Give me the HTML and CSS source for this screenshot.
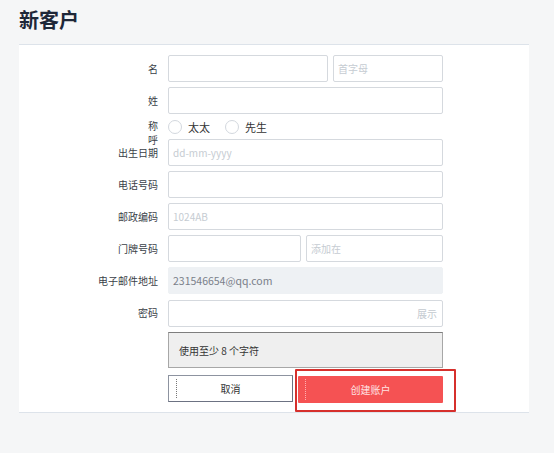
FILE: index.html
```
<!DOCTYPE html>
<html lang="zh">
<head>
    <meta charset="UTF-8">
    <meta name="viewport" content="width=device-width, initial-scale=1.0">
    <title>新客户</title>
    <link rel="stylesheet" href="styles.css">
</head>
<body>
    <h1 class="page-title">新客户</h1>

    <div class="card">
        <form class="customer-form">
            <label class="field-label">名</label>
            <div class="field-pair name-pair">
                <input class="text-input" type="text">
                <input class="text-input" type="text" placeholder="首字母">
            </div>

            <label class="field-label">姓</label>
            <input class="text-input" type="text">

            <label class="field-label title-label"><span class="wrap-label">称呼</span></label>
            <div class="radio-group">
                <span class="radio-option"><span class="radio-circle"></span>太太</span>
                <span class="radio-option"><span class="radio-circle"></span>先生</span>
            </div>

            <label class="field-label">出生日期</label>
            <input class="text-input" type="text" placeholder="dd-mm-yyyy">

            <label class="field-label">电话号码</label>
            <input class="text-input" type="text">

            <label class="field-label">邮政编码</label>
            <input class="text-input" type="text" placeholder="1024AB">

            <label class="field-label">门牌号码</label>
            <div class="field-pair house-pair">
                <input class="text-input" type="text">
                <input class="text-input" type="text" placeholder="添加在">
            </div>

            <label class="field-label">电子邮件地址</label>
            <input class="text-input readonly-input" type="text" value="231546654@qq.com" readonly>

            <label class="field-label">密码</label>
            <div class="password-box">
                <input class="text-input" type="password">
                <span class="show-link">展示</span>
            </div>

            <span></span>
            <div class="hint-box">使用至少 8 个字符</div>

            <span></span>
            <div class="button-row">
                <button type="button" class="btn btn-cancel"><span class="focus-mark"></span>取消</button>
                <div class="create-wrap">
                    <button type="button" class="btn btn-create"><span class="focus-mark"></span>创建账户</button>
                    <span class="highlight-box"></span>
                </div>
            </div>
        </form>
    </div>
</body>
</html>
```

FILE: styles.css
```
body {
    margin: 0;
    background-color: #f5f6f7;
    font-family: "Noto Sans CJK SC", "Noto Sans", sans-serif;
    color: #3a3f48;
}
.page-title {
    margin: 0;
    padding: 7px 19px 0;
    height: 37px;
    font-size: 20px;
    line-height: 26px;
    font-weight: 700;
    color: #1e2738;
}
.card {
    width: 510px;
    margin-left: 19px;
    background-color: #fff;
    border-top: 1px solid #dde3ea;
    border-bottom: 1px solid #dde3ea;
    padding: 10px 0 9px;
}
.customer-form {
    display: grid;
    grid-template-columns: 139px 275px;
    column-gap: 10px;
    row-gap: 5px;
}
.field-label {
    font-size: 10px;
    line-height: 14px;
    text-align: right;
    align-self: center;
    color: #3a3f48;
}
.title-label {
    align-self: start;
    height: 15px;
}
.wrap-label {
    display: inline-block;
    width: 12px;
    line-height: 14px;
}
.text-input {
    box-sizing: border-box;
    height: 27px;
    width: 100%;
    margin: 0;
    padding: 0 4px;
    border: 1px solid #d5d9de;
    border-radius: 2px;
    background: #fff;
    font-family: inherit;
    font-size: 10px;
    color: #3a3f48;
    outline: none;
}
.text-input::placeholder {
    color: #c6ccd2;
}
.field-pair {
    display: flex;
    gap: 5px;
}
.name-pair .text-input:first-child { width: 160px; }
.name-pair .text-input:last-child { width: 110px; }
.house-pair .text-input:first-child { width: 133px; }
.house-pair .text-input:last-child { width: 137px; }
.radio-group {
    display: flex;
    align-items: center;
    height: 15px;
    gap: 15px;
    font-size: 11px;
    color: #333;
}
.radio-option {
    display: flex;
    align-items: center;
    gap: 6px;
}
.radio-circle {
    box-sizing: border-box;
    width: 14px;
    height: 14px;
    border: 1px solid #d3d8de;
    border-radius: 50%;
    background: #fff;
}
.readonly-input {
    background-color: #eef1f4;
    border-color: #eef1f4;
    color: #7a808a;
    font-size: 10.5px;
}
.password-box {
    position: relative;
}
.show-link {
    position: absolute;
    right: 6px;
    top: 7px;
    font-size: 10px;
    color: #c3c9cf;
}
.hint-box {
    box-sizing: border-box;
    height: 36px;
    padding-left: 10px;
    display: flex;
    align-items: center;
    background-color: #efefef;
    border: 1px solid #a7a7a7;
    border-top-color: #7e7e7e;
    font-size: 10px;
    color: #333;
}
.button-row {
    display: flex;
    gap: 5px;
    margin-top: 2px;
}
.btn {
    position: relative;
    box-sizing: border-box;
    height: 27px;
    margin: 0;
    font-family: inherit;
    font-size: 10px;
    cursor: pointer;
}
.btn-cancel {
    width: 125px;
    background: #fff;
    color: #333;
    border: 1px solid #8d93a0;
    border-bottom-color: #6c7282;
    border-right-color: #6c7282;
}
.btn-create {
    width: 145px;
    background-color: #f55253;
    color: #ffe4e4;
    border: none;
    border-radius: 1px;
}
.focus-mark {
    position: absolute;
    left: 7px;
    top: 3px;
    bottom: 3px;
    border-left: 1px dotted #777;
}
.btn-create .focus-mark {
    border-left-color: #ffb0b0;
}
.create-wrap {
    position: relative;
}
.highlight-box {
    position: absolute;
    left: -3px;
    top: -6px;
    width: 157px;
    height: 39px;
    border: 2px solid #d6302c;
    border-radius: 1px;
}
```
